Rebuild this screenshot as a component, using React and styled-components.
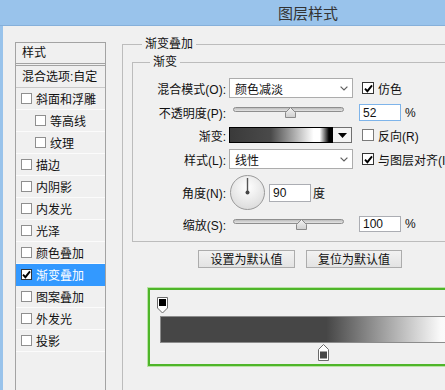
import React from 'react';
import styled, { createGlobalStyle } from 'styled-components';

const GlobalStyle = createGlobalStyle`
  html, body { margin: 0; padding: 0; background: #f0f0f0; overflow: hidden; }
  body {
    font-family: "Liberation Sans", "Noto Sans CJK SC", sans-serif;
    font-size: 12px;
    color: #111;
  }
  * { box-sizing: border-box; }
`;

const Window = styled.div`
  width: 445px;
  height: 390px;
  overflow: hidden;
  display: flex;
  flex-direction: column;
  background: #f0f0f0;
`;

const TitleBar = styled.div`
  height: 26px;
  flex: none;
  background: #99c3eb;
  border-bottom: 1px solid #86b0da;
  display: flex;
  align-items: center;
  padding-left: 278px;
  font-family: "Noto Sans CJK SC", sans-serif;
  font-size: 15px;
  color: #333;
`;

const Body = styled.div`
  flex: 1;
  min-height: 0;
  display: flex;
  border-left: 3px solid #99c3eb;
  overflow: hidden;
`;

const LeftCol = styled.div`
  flex: none;
  padding: 16px 0 0 12px;
`;

const StyleList = styled.div`
  width: 91px;
  height: 400px;
  border: 1px solid #a3a3a3;
  background: #f0f0f0;
  font-family: "Liberation Sans", "Noto Sans CJK SC", sans-serif;
`;

const ListHeader = styled.div`
  height: 23px;
  padding: 0 0 3px 6px;
  display: flex;
  align-items: center;
  border-bottom: 3px double #a3a3a3;
`;

const BlendRow = styled.div`
  height: 22px;
  padding: 0 0 2px 6px;
  display: flex;
  align-items: center;
  border-bottom: 1px solid #c9c9c9;
  white-space: nowrap;
`;

const ListItem = styled.div`
  height: 22px;
  display: flex;
  align-items: center;
  gap: 4px;
  padding-left: ${p => (p.$indent ? 19 : 5)}px;
  border-bottom: 1px solid ${p => (p.$selected ? '#3399ff' : '#fbfbfb')};
  background: ${p => (p.$selected ? '#3399ff' : 'transparent')};
  color: ${p => (p.$selected ? '#fff' : '#111')};
  white-space: nowrap;
`;

const CheckBox = styled.span`
  flex: none;
  width: ${p => p.$size}px;
  height: ${p => p.$size}px;
  border: 1px solid ${p => p.$border};
  background: #fff;
  display: flex;
  align-items: center;
  justify-content: center;
`;

const Check = ({ checked, size = 11, border = '#8f8f8f' }) => (
  <CheckBox $size={size} $border={checked ? '#333' : border}>
    {checked && (
      <svg width="9" height="9" viewBox="0 0 9 9">
        <path d="M1 4.6 L3.4 7.2 L8 1.4" fill="none" stroke="#000" strokeWidth="1.9" />
      </svg>
    )}
  </CheckBox>
);

const RightCol = styled.div`
  flex: none;
  padding: 10px 0 0 16px;
`;

const OuterGroup = styled.fieldset`
  margin: 0;
  width: 420px;
  min-height: 420px;
  min-width: 0;
  padding: 2px 0 0 9px;
  border: 1px solid #bcbcbc;
`;

const Legend = styled.legend`
  padding: 0 3px;
  margin-left: ${p => p.$offset}px;
  line-height: 16px;
  font-size: 12px;
  color: #111;
`;

const InnerGroup = styled.fieldset`
  margin: 0;
  min-width: 0;
  padding: 8px 0 9px 0;
  border: 1px solid #bcbcbc;
`;

const Rows = styled.div`
  display: flex;
  flex-direction: column;
  gap: 6px;
`;

const Row = styled.div`
  height: ${p => p.$h}px;
  display: flex;
  align-items: center;
  white-space: nowrap;
`;

const Label = styled.span`
  flex: none;
  width: 93px;
  margin-right: 3px;
  text-align: right;
`;

const SelectBox = styled.div`
  flex: none;
  width: 124px;
  height: 20px;
  background: #fff;
  border: 1px solid #acacac;
  padding: 0 4px 0 5px;
  display: flex;
  align-items: center;
  justify-content: space-between;
`;

const Chevron = () => (
  <svg width="8" height="5" viewBox="0 0 8 5">
    <path d="M0.6 0.6 L4 4 L7.4 0.6" fill="none" stroke="#606060" strokeWidth="1.2" />
  </svg>
);

const Select = ({ value }) => (
  <SelectBox>
    <span>{value}</span>
    <Chevron />
  </SelectBox>
);

const Option = styled.span`
  display: flex;
  align-items: center;
  gap: 4px;
  margin-left: ${p => p.$ml}px;
`;

const SliderWrap = styled.div`
  flex: none;
  position: relative;
  width: 124px;
  height: 11px;
  padding-left: 4px;
`;

const Track = styled.div`
  width: 111px;
  height: 5px;
  border-radius: 3px;
  border: 1px solid #8e8e8e;
  background: linear-gradient(#bdbdbd, #e4e4e4);
`;

const Thumb = styled.svg`
  position: absolute;
  top: 0;
  margin-left: -5.5px;
`;

const Slider = ({ pos }) => (
  <SliderWrap>
    <Track />
    <Thumb width="11" height="11" viewBox="0 0 11 11" style={{ left: `${4 + 111 * pos}px` }}>
      <defs>
        <linearGradient id="thumbFill" x1="0" y1="0" x2="0" y2="1">
          <stop offset="0" stopColor="#f4f4f4" />
          <stop offset="1" stopColor="#cfcfcf" />
        </linearGradient>
      </defs>
      <polygon points="0.5,10.5 0.5,5.5 5.5,0.5 10.5,5.5 10.5,10.5" fill="url(#thumbFill)" stroke="#8a8a8a" />
    </Thumb>
  </SliderWrap>
);

const NumInput = styled.input`
  flex: none;
  width: 42px;
  height: ${p => p.$h}px;
  margin: 0 0 0 ${p => p.$ml}px;
  padding: 0 3px;
  border: 1px solid ${p => (p.$focus ? '#7eb4ea' : '#abadb3')};
  background: #fff;
  font-family: "Liberation Sans", sans-serif;
  font-size: 12px;
  color: #111;
  outline: none;
`;

const Unit = styled.span`
  margin-left: ${p => p.$ml}px;
`;

const Swatch = styled.div`
  flex: none;
  width: 104px;
  height: 16px;
  border: 1px solid #000;
  background: linear-gradient(to right, #3a3a3a 0%, #4a4a4a 40%, #a8a8a8 62%, #fff 82%, #fff 88%, #000 97%);
`;

const DropButton = styled.div`
  flex: none;
  width: 19px;
  height: 16px;
  border: 1px solid #707070;
  border-left: none;
  background: #f4f4f4;
  display: flex;
  align-items: center;
  justify-content: center;
`;

const DialSvg = styled.svg`
  flex: none;
  margin-left: 1px;
`;

const Dial = () => (
  <DialSvg width="35" height="35" viewBox="0 0 35 35">
    <defs>
      <radialGradient id="dialFill" cx="0.5" cy="0.35" r="0.65">
        <stop offset="0" stopColor="#ffffff" />
        <stop offset="1" stopColor="#dcdcdc" />
      </radialGradient>
    </defs>
    <circle cx="17.5" cy="17.5" r="17" fill="url(#dialFill)" stroke="#9a9a9a" />
    <line x1="17.5" y1="17.5" x2="17.5" y2="3" stroke="#555" strokeWidth="1.4" />
    <circle cx="17.5" cy="17.5" r="2" fill="#444" />
  </DialSvg>
);

const ButtonRow = styled.div`
  display: flex;
  gap: 11px;
  margin: 8px 0 0 66px;
`;

const Button = styled.button`
  width: ${p => p.$w}px;
  height: 18px;
  padding: 0;
  border: 1px solid #acacac;
  background: linear-gradient(#f2f2f2, #e3e3e3);
  font-family: "Noto Sans CJK SC", sans-serif;
  font-size: 12px;
  line-height: 16px;
  color: #111;
`;

const GradientEditor = styled.div`
  margin: 20px 0 0 16px;
  width: 330px;
  height: 78px;
  border: 2px solid #4fb52a;
  box-shadow: 0 0 0 1px #b8e4a4;
  padding: 7px 0 0 7px;
  display: flex;
  flex-direction: column;
`;

const StopRow = styled.div`
  height: ${p => p.$h}px;
  padding-left: ${p => p.$at}px;
  display: flex;
`;

const GradientBar = styled.div`
  margin: 2px 0 1px 3px;
  width: 320px;
  height: 27px;
  border: 1px solid #8c8c8c;
  background: linear-gradient(to right, #464646 0%, #464646 52%, #fafafa 88%, #ffffff 100%);
`;

const TopStop = () => (
  <svg width="11" height="17" viewBox="0 0 11 17">
    <polygon points="0.5,0.5 10.5,0.5 10.5,11 5.5,16 0.5,11" fill="#fff" stroke="#6a6a6a" />
    <rect x="2" y="2" width="7" height="7" fill="#000" />
  </svg>
);

const BottomStop = () => (
  <svg width="11" height="17" viewBox="0 0 11 17">
    <polygon points="5.5,0.5 10.5,5.5 10.5,16.5 0.5,16.5 0.5,5.5" fill="#fff" stroke="#6a6a6a" />
    <rect x="2" y="7.5" width="7" height="7" fill="#464646" />
  </svg>
);

const items = [
  { name: '斜面和浮雕' },
  { name: '等高线', indent: true },
  { name: '纹理', indent: true },
  { name: '描边' },
  { name: '内阴影' },
  { name: '内发光' },
  { name: '光泽' },
  { name: '颜色叠加' },
  { name: '渐变叠加', selected: true },
  { name: '图案叠加' },
  { name: '外发光' },
  { name: '投影' },
];

export default function App() {
  return (
    <>
      <GlobalStyle />
      <Window>
        <TitleBar>图层样式</TitleBar>
        <Body>
          <LeftCol>
            <StyleList>
              <ListHeader>样式</ListHeader>
              <BlendRow>混合选项:自定</BlendRow>
              {items.map(it => (
                <ListItem key={it.name} $indent={it.indent} $selected={it.selected}>
                  <Check checked={it.selected} />
                  <span>{it.name}</span>
                </ListItem>
              ))}
            </StyleList>
          </LeftCol>
          <RightCol>
            <OuterGroup>
              <Legend $offset={10}>渐变叠加</Legend>
              <InnerGroup>
                <Legend $offset={17}>渐变</Legend>
                <Rows>
                  <Row $h={20}>
                    <Label>混合模式(O):</Label>
                    <Select value="颜色减淡" />
                    <Option $ml={9}>
                      <Check checked size={12} />
                      <span>仿色</span>
                    </Option>
                  </Row>
                  <Row $h={17}>
                    <Label>不透明度(P):</Label>
                    <Slider pos={0.52} />
                    <NumInput $h={17} $ml={6} $focus readOnly value="52" />
                    <Unit $ml={4}>%</Unit>
                  </Row>
                  <Row $h={16}>
                    <Label>渐变:</Label>
                    <Swatch />
                    <DropButton>
                      <svg width="9" height="5" viewBox="0 0 9 5">
                        <polygon points="0,0 9,0 4.5,5" fill="#000" />
                      </svg>
                    </DropButton>
                    <Option $ml={10}>
                      <Check size={12} border="#7a7a7a" />
                      <span>反向(R)</span>
                    </Option>
                  </Row>
                  <Row $h={20}>
                    <Label>样式(L):</Label>
                    <Select value="线性" />
                    <Option $ml={9}>
                      <Check checked size={12} />
                      <span>与图层对齐(I)</span>
                    </Option>
                  </Row>
                  <Row $h={35}>
                    <Label>角度(N):</Label>
                    <Dial />
                    <NumInput $h={18} $ml={4} readOnly value="90" />
                    <Unit $ml={2}>度</Unit>
                  </Row>
                  <Row $h={16}>
                    <Label>缩放(S):</Label>
                    <Slider pos={0.62} />
                    <NumInput $h={16} $ml={6} readOnly value="100" />
                    <Unit $ml={4}>%</Unit>
                  </Row>
                </Rows>
              </InnerGroup>
              <ButtonRow>
                <Button $w={97}>设置为默认值</Button>
                <Button $w={96}>复位为默认值</Button>
              </ButtonRow>
              <GradientEditor>
                <StopRow $h={17} $at={0}>
                  <TopStop />
                </StopRow>
                <GradientBar />
                <StopRow $h={17} $at={161}>
                  <BottomStop />
                </StopRow>
              </GradientEditor>
            </OuterGroup>
          </RightCol>
        </Body>
      </Window>
    </>
  );
}
